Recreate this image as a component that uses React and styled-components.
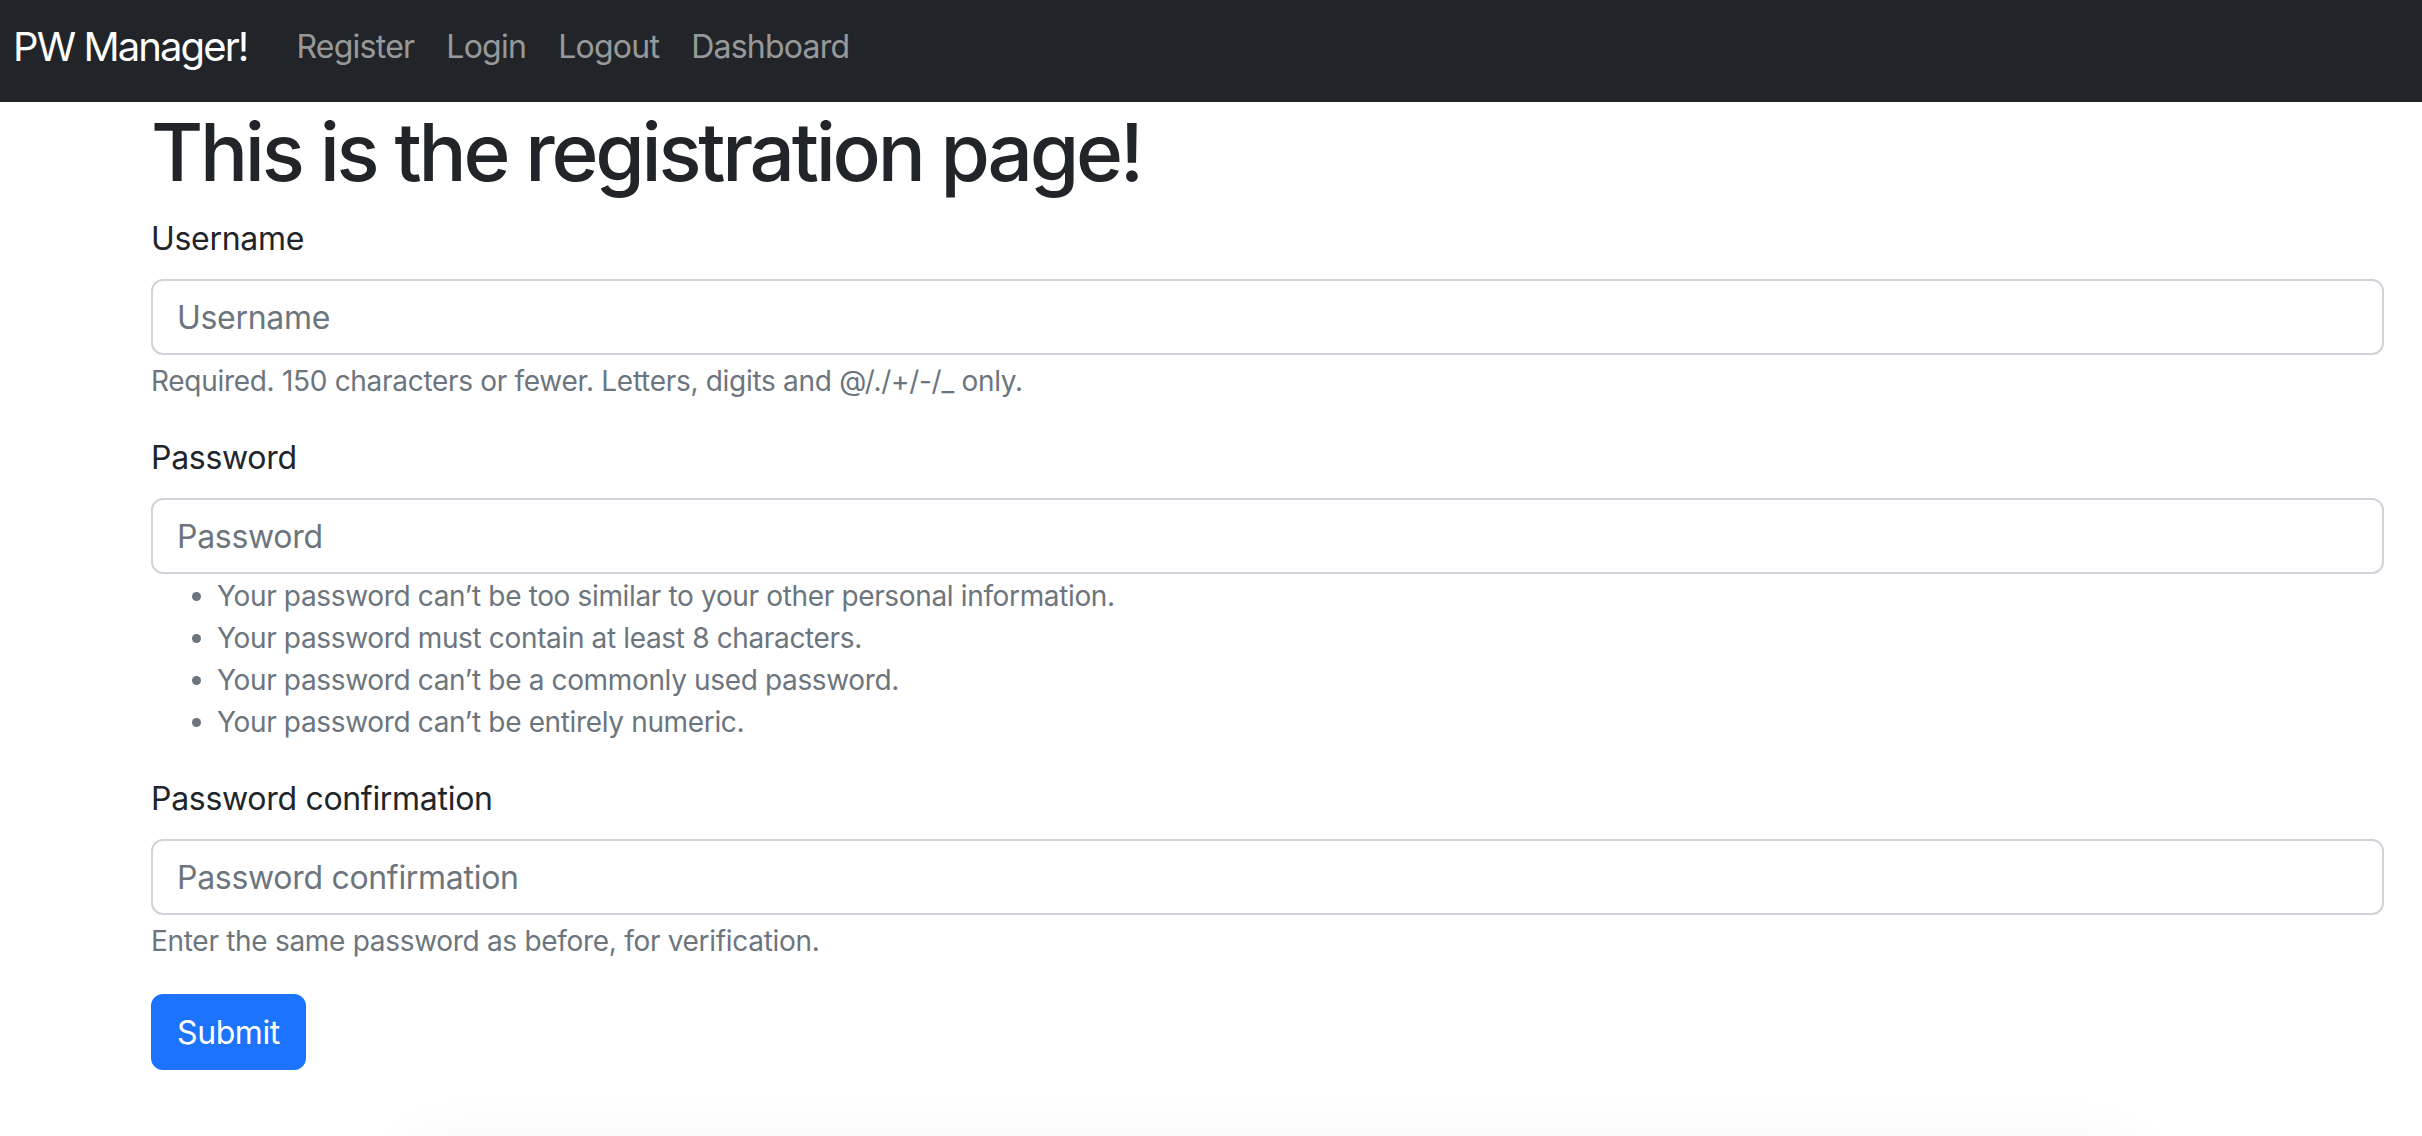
import React from "react";
import styled, { createGlobalStyle } from "styled-components";

const GlobalStyle = createGlobalStyle`
  * { box-sizing: border-box; }
  html, body { margin: 0; padding: 0; background: #ffffff; }
  body {
    font-family: Inter, "Noto Sans", "Liberation Sans", sans-serif;
    color: #212529;
    -webkit-font-smoothing: antialiased;
  }
`;

const Navbar = styled.nav`
  display: flex;
  align-items: center;
  height: 102px;
  padding: 0 0 9px 13px;
  background: #212529;
`;

const Brand = styled.a`
  font-size: 40px;
  line-height: 60px;
  color: #ffffff;
  text-decoration: none;
  margin-right: 33px;
  letter-spacing: -1.9px;
`;

const NavList = styled.ul`
  display: flex;
  margin: 0;
  padding: 0;
  list-style: none;
`;

const NavLink = styled.a`
  display: block;
  padding: 0 16px;
  font-size: 32px;
  line-height: 48px;
  color: rgba(255, 255, 255, 0.55);
  text-decoration: none;
  letter-spacing: -0.75px;
`;

const Main = styled.main`
  padding: 2px 38px 0 151px;
`;

const Title = styled.h1`
  margin: 0 0 15px;
  font-size: 80px;
  line-height: 96px;
  font-weight: 500;
  letter-spacing: -3.25px;
`;

const Form = styled.form`
  display: flex;
  flex-direction: column;
`;

const Field = styled.div`
  display: flex;
  flex-direction: column;
  margin-bottom: 32px;
`;

const Label = styled.label`
  font-size: 32px;
  line-height: 48px;
  margin-bottom: 16px;
  letter-spacing: -0.3px;
`;

const Input = styled.input`
  height: 76px;
  width: 100%;
  padding: 0 24px;
  font-family: inherit;
  font-size: 32px;
  color: #212529;
  background: #fff;
  border: 2px solid #ced4da;
  border-radius: 12px;
  outline: none;
  letter-spacing: -0.3px;
  &::placeholder {
    color: #6c757d;
    opacity: 1;
  }
`;

const HelpText = styled.div`
  margin-top: 5px;
  font-size: 28px;
  line-height: 42px;
  color: #6c757d;
  letter-spacing: -0.3px;
`;

const HelpList = styled.ul`
  margin: 1px 0 0;
  padding-left: 66px;
  font-size: 28px;
  line-height: 42px;
  color: #6c757d;
  letter-spacing: -0.35px;
`;

const SubmitButton = styled.button`
  align-self: flex-start;
  height: 76px;
  padding: 0 24px;
  font-family: inherit;
  font-size: 32px;
  color: #ffffff;
  background: #1c73fd;
  border: 2px solid #1c73fd;
  border-radius: 12px;
  letter-spacing: -0.4px;
  cursor: pointer;
`;

const BottomShade = styled.div`
  position: fixed;
  left: 420px;
  right: 300px;
  bottom: -90px;
  height: 60px;
  border-radius: 60px;
  box-shadow: 0 0 60px 30px rgba(0, 0, 0, 0.035);
  pointer-events: none;
`;

const links = ["Register", "Login", "Logout", "Dashboard"];

const passwordRules = [
  "Your password can\u2019t be too similar to your other personal information.",
  "Your password must contain at least 8 characters.",
  "Your password can\u2019t be a commonly used password.",
  "Your password can\u2019t be entirely numeric.",
];

export default function App() {
  return (
    <>
      <GlobalStyle />
      <Navbar>
        <Brand href="#">PW Manager!</Brand>
        <NavList>
          {links.map((l) => (
            <li key={l}>
              <NavLink href="#">{l}</NavLink>
            </li>
          ))}
        </NavList>
      </Navbar>
      <Main>
        <Title>This is the registration page!</Title>
        <Form onSubmit={(e) => e.preventDefault()}>
          <Field>
            <Label htmlFor="username">Username</Label>
            <Input id="username" type="text" placeholder="Username" />
            <HelpText>
              Required. 150 characters or fewer. Letters, digits and @/./+/-/_ only.
            </HelpText>
          </Field>
          <Field>
            <Label htmlFor="password1">Password</Label>
            <Input id="password1" type="password" placeholder="Password" />
            <HelpList>
              {passwordRules.map((r) => (
                <li key={r}>{r}</li>
              ))}
            </HelpList>
          </Field>
          <Field>
            <Label htmlFor="password2">Password confirmation</Label>
            <Input id="password2" type="password" placeholder="Password confirmation" />
            <HelpText>Enter the same password as before, for verification.</HelpText>
          </Field>
          <SubmitButton type="submit">Submit</SubmitButton>
        </Form>
      </Main>
      <BottomShade />
    </>
  );
}
